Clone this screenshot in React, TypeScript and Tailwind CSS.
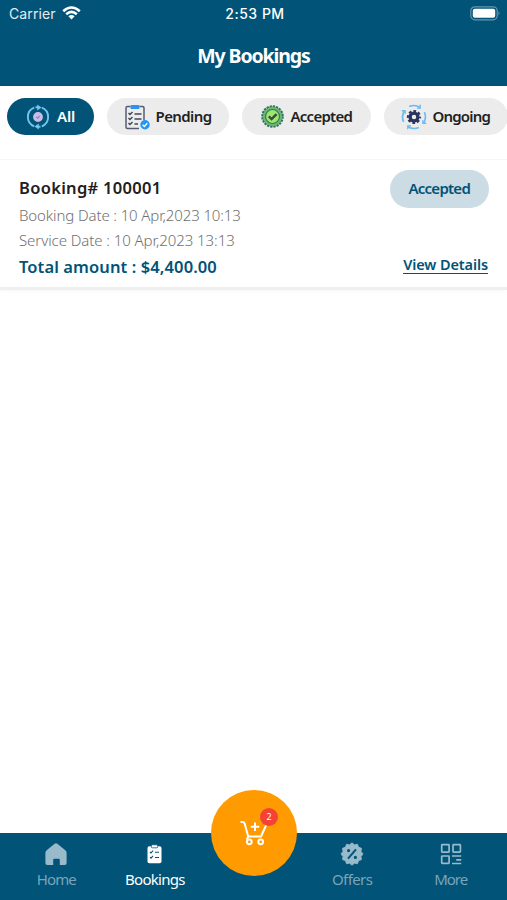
import type { ReactNode } from "react";
import { clsx } from "clsx";

type ChipProps = {
  label: string;
  icon: ReactNode;
  className: string;
  textClass: string;
  active?: boolean;
};

type NavItemProps = {
  label: string;
  icon: ReactNode;
  textClass: string;
  active?: boolean;
};

export default function App() {
  return (
    <div className="flex h-[900px] w-[507px] flex-col overflow-hidden bg-white font-['Noto_Sans','Open_Sans',sans-serif]">
      <header className="h-[86px] shrink-0 bg-[#015377] text-white">
        <StatusBar />
        <h1 className="flex h-14 items-center justify-center text-[19.5px] font-bold tracking-[-1.1px]">
          My Bookings
        </h1>
      </header>

      <div className="flex h-[74px] shrink-0 gap-[12.5px] overflow-hidden border-b border-[#f5f5f5] pt-[12px] pl-[7px]">
        <Chip label="All" icon={<AllIcon />} className="w-[87px] gap-[7px] pl-[19px]" textClass="tracking-[-0.2px]" active />
        <Chip label="Pending" icon={<PendingIcon />} className="w-[122.5px] gap-[6px] pl-[17px]" textClass="tracking-[-0.6px]" />
        <Chip label="Accepted" icon={<AcceptedIcon />} className="w-[129.5px] gap-[6px] pl-[18px]" textClass="tracking-[-0.75px]" />
        <Chip label="Ongoing" icon={<OngoingIcon />} className="w-[124px] gap-[6px] pl-[17px]" textClass="tracking-[-0.8px]" />
      </div>

      <main className="grow">
        <BookingCard />
      </main>

      <nav className="relative grid h-[67px] shrink-0 grid-cols-5 bg-[#015377] px-[7px]">
        <NavItem label="Home" icon={<HomeIcon />} textClass="tracking-[-0.9px]" />
        <NavItem label="Bookings" icon={<BookingsIcon />} textClass="tracking-[-0.7px]" active />
        <span />
        <NavItem label="Offers" icon={<OffersIcon />} textClass="tracking-[-0.6px]" />
        <NavItem label="More" icon={<MoreIcon />} textClass="tracking-[-1px]" />
        <button
          type="button"
          aria-label="Cart"
          className="absolute -top-[43px] left-[211px] flex size-[86px] items-center justify-center rounded-full bg-[#ff9a01]"
        >
          <CartIcon />
          <span className="absolute top-[18px] left-[49px] flex size-[18px] items-center justify-center rounded-full bg-[#f44336] text-[9px] text-white">
            2
          </span>
        </button>
      </nav>
    </div>
  );
}

function StatusBar() {
  return (
    <div className="grid h-7 grid-cols-3 items-center pr-[6px] pl-[9px] font-['Inter',sans-serif]">
      <div className="flex items-center gap-[6px] pb-[2px] text-[14px] tracking-[0.1px] text-[#e2edf2]">
        Carrier
        <svg width="19" height="14" viewBox="0 0 19 14" fill="none" stroke="white" strokeWidth="2.6">
          <path d="M1.2 5.2Q9.5-2.2 17.8 5.2M4.2 8.2Q9.5 3.6 14.8 8.2" />
          <path d="M6.4 10.2Q9.5 7.8 12.6 10.2L9.5 13.4Z" fill="white" stroke="none" />
        </svg>
      </div>
      <div className="pb-px text-center text-[14px] font-medium tracking-[0.5px] whitespace-nowrap">2:53 PM</div>
      <svg className="mb-[2px] justify-self-end" width="31" height="15" viewBox="0 0 31 15">
        <rect x="0.8" y="0.8" width="26.4" height="13" rx="4" fill="none" stroke="#6596ac" strokeWidth="1.2" />
        <rect x="2.8" y="2.8" width="22.4" height="9" rx="2" fill="white" />
        <path d="M28.5 5.2q2 2.1 0 4.2z" fill="#6596ac" />
      </svg>
    </div>
  );
}

function Chip({ label, icon, className, textClass, active }: ChipProps) {
  return (
    <button
      type="button"
      className={clsx(
        "flex h-[37px] shrink-0 items-center rounded-full text-[15px] font-semibold",
        active ? "bg-[#015377] text-white" : "bg-[#ececec] text-[#222222]",
        className
      )}
    >
      <span className="flex shrink-0">{icon}</span>
      <span className={clsx("pb-px", textClass)}>{label}</span>
    </button>
  );
}

function BookingCard() {
  return (
    <article className="flex h-[130px] justify-between border-b-[3px] border-[#efefef] pt-[9px] pr-[18px] pl-[19px] shadow-[0_2px_2px_#fafafa]">
      <div className="whitespace-nowrap">
        <h2 className="pt-[6px] text-[16.5px] leading-[25px] font-semibold tracking-[0.3px] text-[#202020]">
          Booking# 100001
        </h2>
        <p className="pt-[3px] text-[15px] leading-[25px] font-light tracking-[-0.12px] text-[#707070]">
          Booking Date : 10 Apr,2023 10:13
        </p>
        <p className="text-[15px] leading-[24px] font-light tracking-[-0.07px] text-[#707070]">
          Service Date : 10 Apr,2023 13:13
        </p>
        <p className="pt-px text-[16.5px] leading-[27px] font-semibold tracking-[0.1px] text-[#015377]">
          Total amount : $4,400.00
        </p>
      </div>
      <div className="flex flex-col items-end text-[#015377]">
        <span className="mt-px flex h-[38px] w-[99.5px] items-center justify-center rounded-full bg-[#cbdce4] pb-px text-[15px] font-semibold tracking-[-0.75px]">
          Accepted
        </span>
        <a className="mt-[48px] mr-px border-b border-[#015377] text-[14.5px] leading-[17px] font-semibold tracking-[-0.1px]">
          View Details
        </a>
      </div>
    </article>
  );
}

function NavItem({ label, icon, textClass, active }: NavItemProps) {
  return (
    <button
      type="button"
      className={clsx("flex flex-col items-center pt-[9px]", active ? "text-white" : "text-[#98bacb]")}
    >
      <span className="flex h-6 items-center">{icon}</span>
      <span className={clsx("pt-[3px] text-[15px] leading-[20px]", active ? "" : "text-[#79a5b9]", textClass)}>
        {label}
      </span>
    </button>
  );
}

function AllIcon() {
  return (
    <svg width="24" height="26" viewBox="0 0 24 26" fill="none">
      <g stroke="#73c5ee" strokeWidth="1.9">
        <path d="M8.2 3.7A10 10 0 0 0 8.2 22.3" />
        <path d="M15.8 3.7A10 10 0 0 1 15.8 22.3" />
        <path d="M9.5 3.3H13M10.5 22.7H14.5" />
      </g>
      <path d="M11.2.6L15.5 3.5L11.2 6.4ZM12.8 19.6L8.5 22.5L12.8 25.4Z" fill="#73c5ee" />
      <circle cx="12" cy="13" r="4" fill="#c9bde8" stroke="#c9bde8" strokeWidth="1.8" />
      <path d="M10.2 13l1.4 1.2 2.3-2.4" stroke="#8f80bb" strokeWidth="1.1" />
    </svg>
  );
}

function PendingIcon() {
  return (
    <svg width="26" height="26" viewBox="0 0 26 26" fill="none">
      <path d="M6.5 2.5H3.5Q2 2.5 2 4V23Q2 24.5 3.5 24.5H15M15.5 2.5H18.5Q20 2.5 20 4V16" stroke="#555b73" strokeWidth="1.5" />
      <rect x="6.5" y="1" width="9" height="4" rx="1" fill="#2c91f2" />
      <g stroke="#40465d" strokeWidth="1.5">
        <path d="M4.5 9l1.5 1.5L8.5 8M4.5 14l1.5 1.5L8.5 13M4.5 19l1.5 1.5L8.5 18" />
        <path d="M10.5 10H17.5M10.5 15H17.5M10.5 20H14" />
      </g>
      <circle cx="21" cy="20.8" r="4.7" fill="#2495f5" />
      <path d="M18.6 20.8l1.7 1.6 3-3.1" stroke="white" strokeWidth="1.4" />
    </svg>
  );
}

function AcceptedIcon() {
  return (
    <svg width="25" height="25" viewBox="0 0 25 25" fill="none">
      <circle cx="12.5" cy="12.5" r="10.3" fill="#68bb75" stroke="#406e5c" strokeWidth="2" strokeDasharray="2.2 1.04" />
      <circle cx="12.5" cy="12.5" r="9.3" fill="#65b97a" />
      <circle cx="12.5" cy="12.5" r="7" fill="#9fe66d" stroke="#3e7556" strokeWidth="1.2" />
      <path d="M8.8 12.3l2.8 2.8 5-5" stroke="#354d46" strokeWidth="2.5" />
    </svg>
  );
}

function OngoingIcon() {
  return (
    <svg width="26" height="26" viewBox="0 0 26 26" fill="none">
      <g stroke="#6db9f1" strokeWidth="1.7">
        <path d="M8.2 2.6A11.3 11.3 0 0 1 18.8 3.3M23.4 8.2A11.3 11.3 0 0 1 22.7 18.8M17.8 23.4A11.3 11.3 0 0 1 7.2 22.7M2.6 17.8A11.3 11.3 0 0 1 3.3 7.2" />
        <path d="M19.2.8V4L16.2 4.3M25.2 19.2H22L21.7 16.2M6.8 25.2V22L9.8 21.7M.8 6.8H4L4.3 9.8" strokeWidth="1.4" />
      </g>
      <circle cx="13" cy="13" r="3.9" stroke="#29345d" strokeWidth="3.3" />
      <circle cx="13" cy="13" r="6.1" stroke="#29345d" strokeWidth="2" strokeDasharray="2.7 2.09" strokeDashoffset="1.3" />
    </svg>
  );
}

function HomeIcon() {
  return (
    <svg width="24" height="24" viewBox="0 0 24 24" fill="currentColor">
      <path d="M10.6 1.8a2.2 2.2 0 0 1 2.8 0l7.9 6.5q1.3 1.1 1.3 2.5V21q0 1.9-1.9 1.9h-4.9v-5.2q0-1-1-1H10.2q-1 0-1 1v5.2H3.3q-1.9 0-1.9-1.9V10.8q0-1.4 1.3-2.5Z" />
    </svg>
  );
}

function BookingsIcon() {
  return (
    <svg width="15" height="20" viewBox="0 0 15 20" fill="none">
      <rect x="0.5" y="2.2" width="14" height="17" rx="1.8" fill="currentColor" />
      <rect x="4.3" y="0.8" width="6.4" height="3" rx="1" fill="currentColor" stroke="#015377" strokeWidth="0.8" />
      <g stroke="#015377" strokeWidth="1.1">
        <path d="M3 8l1 1 2-2.3M3 13.2l1 1 2-2.3" />
        <path d="M8 8.3h4M8 13.5h4" />
      </g>
    </svg>
  );
}

function OffersIcon() {
  return (
    <svg width="24" height="24" viewBox="0 0 24 24" fill="none">
      <path
        fill="currentColor"
        stroke="currentColor"
        strokeWidth="0.8"
        strokeLinejoin="round"
        d="M12 .8L14.4 2.8L17.5 2.2L18.5 5.1L21.5 6.3L21 9.4L23.1 12L21 14.5L21.5 17.6L18.5 18.8L17.5 21.7L14.4 21.2L12 23.2L9.6 21.2L6.5 21.7L5.5 18.8L2.5 17.6L3 14.5L.9 12L3 9.4L2.5 6.3L5.5 5.1L6.5 2.2L9.6 2.8Z"
      />
      <path d="M16 7.3L8 16.7" stroke="#015377" strokeWidth="2" />
      <circle cx="8.6" cy="8.6" r="1.6" fill="#015377" />
      <circle cx="15.4" cy="15.4" r="1.6" fill="#015377" />
    </svg>
  );
}

function MoreIcon() {
  return (
    <svg width="22" height="22" viewBox="0 0 22 22" fill="none" stroke="currentColor" strokeWidth="1.7">
      <rect x="1.7" y="1.7" width="7.4" height="7.4" rx="0.6" />
      <rect x="13" y="1.7" width="7.4" height="7.4" rx="0.6" />
      <rect x="1.7" y="13" width="7.4" height="7.4" rx="0.6" />
      <path d="M12 13H21.2M16.2 16.8H21.2M12 20.5H21.2" />
    </svg>
  );
}

function CartIcon() {
  return (
    <svg width="28" height="26" viewBox="0 0 28 26" fill="none" stroke="white" strokeWidth="2">
      <path d="M1.2 2H2.5Q4.2 2 4.7 3.7L8.2 16.5H21L25.8 5.8" strokeLinecap="round" strokeLinejoin="round" />
      <path d="M8.2 16.5L6.8 19.4M15 2.5V11M10.8 6.8H19.2" />
      <circle cx="9.3" cy="21.8" r="2.4" />
      <circle cx="20.7" cy="21.8" r="2.4" />
    </svg>
  );
}
